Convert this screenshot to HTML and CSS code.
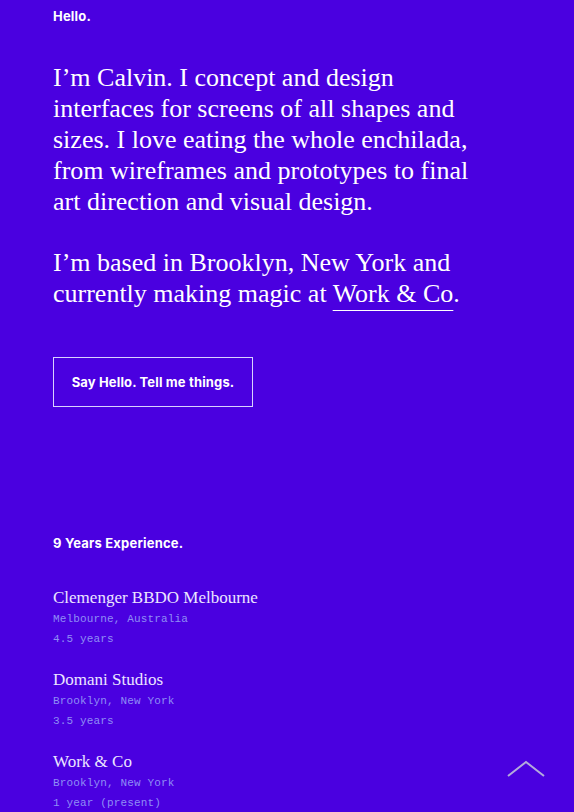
FILE: index.html
```html
<!DOCTYPE html>
<html lang="en">
<head>
    <meta charset="UTF-8">
    <meta name="viewport" content="width=device-width, initial-scale=1.0">
    <title>Calvin</title>
    <link rel="stylesheet" href="styles.css">
</head>
<body>
    <main class="page">
        <section class="intro">
            <h2 class="label">Hello.</h2>
            <p class="lead">I’m Calvin. I concept and design interfaces for screens of all shapes and sizes. I love eating the whole enchilada, from wireframes and prototypes to final art direction and visual design.</p>
            <p class="lead">I’m based in Brooklyn, New York and currently making magic at <a href="#" class="link">Work &amp; Co</a>.</p>
            <a href="#" class="btn">Say Hello. Tell me things.</a>
        </section>

        <section class="experience">
            <h2 class="label">9 Years Experience.</h2>
            <ul class="jobs">
                <li class="job">
                    <div class="job-name">Clemenger BBDO Melbourne</div>
                    <div class="job-meta">Melbourne, Australia</div>
                    <div class="job-meta">4.5 years</div>
                </li>
                <li class="job">
                    <div class="job-name">Domani Studios</div>
                    <div class="job-meta">Brooklyn, New York</div>
                    <div class="job-meta">3.5 years</div>
                </li>
                <li class="job">
                    <div class="job-name">Work &amp; Co</div>
                    <div class="job-meta">Brooklyn, New York</div>
                    <div class="job-meta">1 year (present)</div>
                </li>
            </ul>
        </section>
    </main>

    <a href="#" class="to-top" aria-label="Back to top">
        <svg width="38" height="17" viewBox="0 0 38 17">
            <polyline points="1,16 19,2 37,16" fill="none" stroke="#b3aadb" stroke-width="2"/>
        </svg>
    </a>
</body>
</html>
```

FILE: styles.css
```css
* {
    margin: 0;
    padding: 0;
    box-sizing: border-box;
}

body {
    background: #4a00e0;
    color: #fff;
    font-family: 'Liberation Serif', serif;
    min-height: 100vh;
}

.page {
    padding: 6px 53px 0;
}

.label {
    font-family: 'Inter', sans-serif;
    font-weight: 700;
    font-size: 13px;
    line-height: 20px;
    letter-spacing: 0.2px;
}

.lead {
    font-size: 26px;
    line-height: 31px;
    margin-top: 36px;
    max-width: 440px;
}

.lead + .lead {
    margin-top: 30px;
}

.link {
    color: #fff;
    text-decoration: underline;
    text-decoration-thickness: 1px;
    text-underline-offset: 8px;
}

.btn {
    display: inline-block;
    margin-top: 48px;
    width: 200px;
    height: 50px;
    line-height: 48px;
    border: 1px solid #d9d2ff;
    color: #fff;
    text-decoration: none;
    font-family: 'Inter', sans-serif;
    font-weight: 700;
    font-size: 13px;
    letter-spacing: 0.15px;
    text-align: center;
}

.experience {
    margin-top: 126px;
}

.jobs {
    list-style: none;
    margin-top: 34px;
}

.job + .job {
    margin-top: 20px;
}

.job-name {
    font-size: 17px;
    line-height: 22px;
    color: #ece6ff;
}

.job-meta {
    font-family: 'Liberation Mono', monospace;
    font-size: 11px;
    line-height: 20px;
    letter-spacing: 0.15px;
    color: #8f8ef5;
}

.to-top {
    position: fixed;
    right: 29px;
    bottom: 35px;
    display: block;
    line-height: 0;
}
```
